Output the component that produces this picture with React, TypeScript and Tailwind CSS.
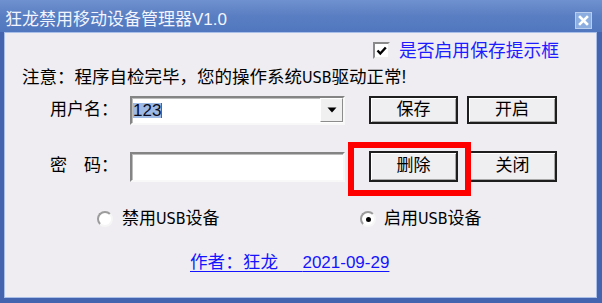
const Latin = ({ children }: { children: React.ReactNode }) => (
    <span className="text-[16px] font-['Liberation_Sans_Narrow','DejaVu_Sans_Condensed',sans-serif]">{children}</span>
);

const Radio = ({ checked }: { checked?: boolean }) => (
    <div className="w-[16px] h-[16px] rounded-full bg-white border-2 border-t-[#9c9c9c] border-l-[#9c9c9c] border-b-[#f6f6f6] border-r-[#f6f6f6] flex items-center justify-center">
        {checked && <div className="w-[5px] h-[5px] rounded-full bg-black" />}
    </div>
);

const Button = ({ label, h, w }: { label: string; h: string; w: string }) => (
    <div className={`${h} ${w} border-2 border-[#1e1e1e] bg-[#efeef1] shadow-[inset_1px_1px_0_#ffffff,inset_-1px_-1px_0_#a8a8a8] flex items-center justify-center text-[17px]`}>
        {label}
    </div>
);

export default function App() {
    return (
        <div className="w-[602px] h-[303px] bg-[#4464b0] flex flex-col overflow-hidden text-black font-['Liberation_Sans','Noto_Sans_CJK_SC',sans-serif]">
            {/* title bar */}
            <div className="h-[32px] shrink-0 pt-[8px] pl-[5px] pr-[10px] flex items-center justify-between bg-gradient-to-b from-[#6f91cf] via-[#5a7ec2] to-[#5077bf]">
                <span className="text-[17px] leading-[20px] text-[#f2f5fd]">
                    狂龙禁用移动设备管理器<span className="font-['Liberation_Sans',sans-serif]">V1.0</span>
                </span>
                <div className="w-[17px] h-[17px] bg-[#8badE0] border border-[#b9cdef] flex items-center justify-center">
                    <svg width="11" height="11" viewBox="0 0 11 11">
                        <path d="M2 2 L9 9 M9 2 L2 9" stroke="#ffffff" strokeWidth="2.6" strokeLinecap="square" />
                    </svg>
                </div>
            </div>

            {/* body */}
            <div className="relative flex-1 ml-[4px] mr-[5px] mb-[5px] border border-[#a9bfe8] bg-[#efedf1] flex flex-col">
                {/* save prompt option */}
                <div className="mt-[9px] h-[17px] pl-[368px] flex items-center gap-[9px]">
                    <div className="w-[17px] h-[17px] bg-white border-2 border-t-[#8a8a8a] border-l-[#8a8a8a] border-b-[#efefef] border-r-[#efefef] flex items-center justify-center">
                        <svg width="11" height="10" viewBox="0 0 11 10">
                            <path d="M1.5 4.5 L4.3 7.5 L9.8 1.5" stroke="#000" strokeWidth="2.4" fill="none" />
                        </svg>
                    </div>
                    <span className="text-[17.8px] leading-[20px] text-[#1c1cff]">是否启用保存提示框</span>
                </div>

                {/* notice */}
                <div className="mt-[8px] h-[20px] pl-[17px] text-[17.5px] leading-[20px]">
                    注意：程序自检完毕，您的操作系统<Latin>USB</Latin>驱动正常!
                </div>

                {/* user row */}
                <div className="mt-[9px] h-[28px] pl-[45px] flex items-center">
                    <span className="w-[80px] text-[17px]">用户名：</span>
                    <div className="w-[215px] h-[29px] bg-white border-2 border-t-[#848484] border-l-[#848484] border-b-[#f8f8f8] border-r-[#f8f8f8] shadow-[inset_1px_1px_0_#bdbdbd] flex items-center justify-between pl-[1px] pr-0">
                        <div className="flex items-center">
                            <span className="bg-[#9db9e6] leading-[15px] text-[17px] font-['Liberation_Sans',sans-serif] text-[#0b0b20]">123</span>
                            <span className="w-[1px] h-[15px] bg-[#8a5a2a]" />
                        </div>
                        <div className="w-[23px] h-[24px] bg-[#f0f0f0] border border-t-[#ffffff] border-l-[#ffffff] border-b-[#8c8c8c] border-r-[#8c8c8c] flex items-center justify-center">
                            <svg width="10" height="6" viewBox="0 0 10 6">
                                <path d="M0.5 0.5 L9.5 0.5 L5 5.5 Z" fill="#000" />
                            </svg>
                        </div>
                    </div>
                    <div className="ml-[24px]">
                        <Button label="保存" h="h-[28px]" w="w-[89px]" />
                    </div>
                    <div className="ml-[9px]">
                        <Button label="开启" h="h-[28px]" w="w-[90px]" />
                    </div>
                </div>

                {/* password row */}
                <div className="mt-[26px] h-[32px] pl-[45px] flex items-center">
                    <span className="w-[80px] text-[17px]">密　码：</span>
                    <div className="w-[215px] h-[30px] mt-[2px] bg-white border-2 border-t-[#848484] border-l-[#848484] border-b-[#f8f8f8] border-r-[#f8f8f8] shadow-[inset_1px_1px_0_#bdbdbd]" />
                    <div className="ml-[24px]">
                        <Button label="删除" h="h-[31px]" w="w-[89px]" />
                    </div>
                    <div className="ml-[10px]">
                        <Button label="关闭" h="h-[31px]" w="w-[89px]" />
                    </div>
                </div>

                {/* usb mode */}
                <div className="mt-[28px] h-[18px] pl-[92px] flex items-center text-[17px]">
                    <div className="w-[263px] flex items-center gap-[9px]">
                        <Radio />
                        <span>禁用<Latin>USB</Latin>设备</span>
                    </div>
                    <div className="flex items-center gap-[8px]">
                        <Radio checked />
                        <span>启用<Latin>USB</Latin>设备</span>
                    </div>
                </div>

                {/* author link */}
                <div className="mt-[25px] pl-[185px] text-[17.6px] leading-[19px]">
                    <span className="text-[#1414ff] underline underline-offset-[3px] whitespace-pre">
                        作者：狂龙     <span className="font-['Liberation_Sans',sans-serif] text-[17px]">2021-09-29</span>
                    </span>
                </div>

                {/* red annotation */}
                <div className="absolute left-[343px] top-[109px] w-[123px] h-[54px] border-[6px] border-[#ff0000]" />
            </div>
        </div>
    );
}
